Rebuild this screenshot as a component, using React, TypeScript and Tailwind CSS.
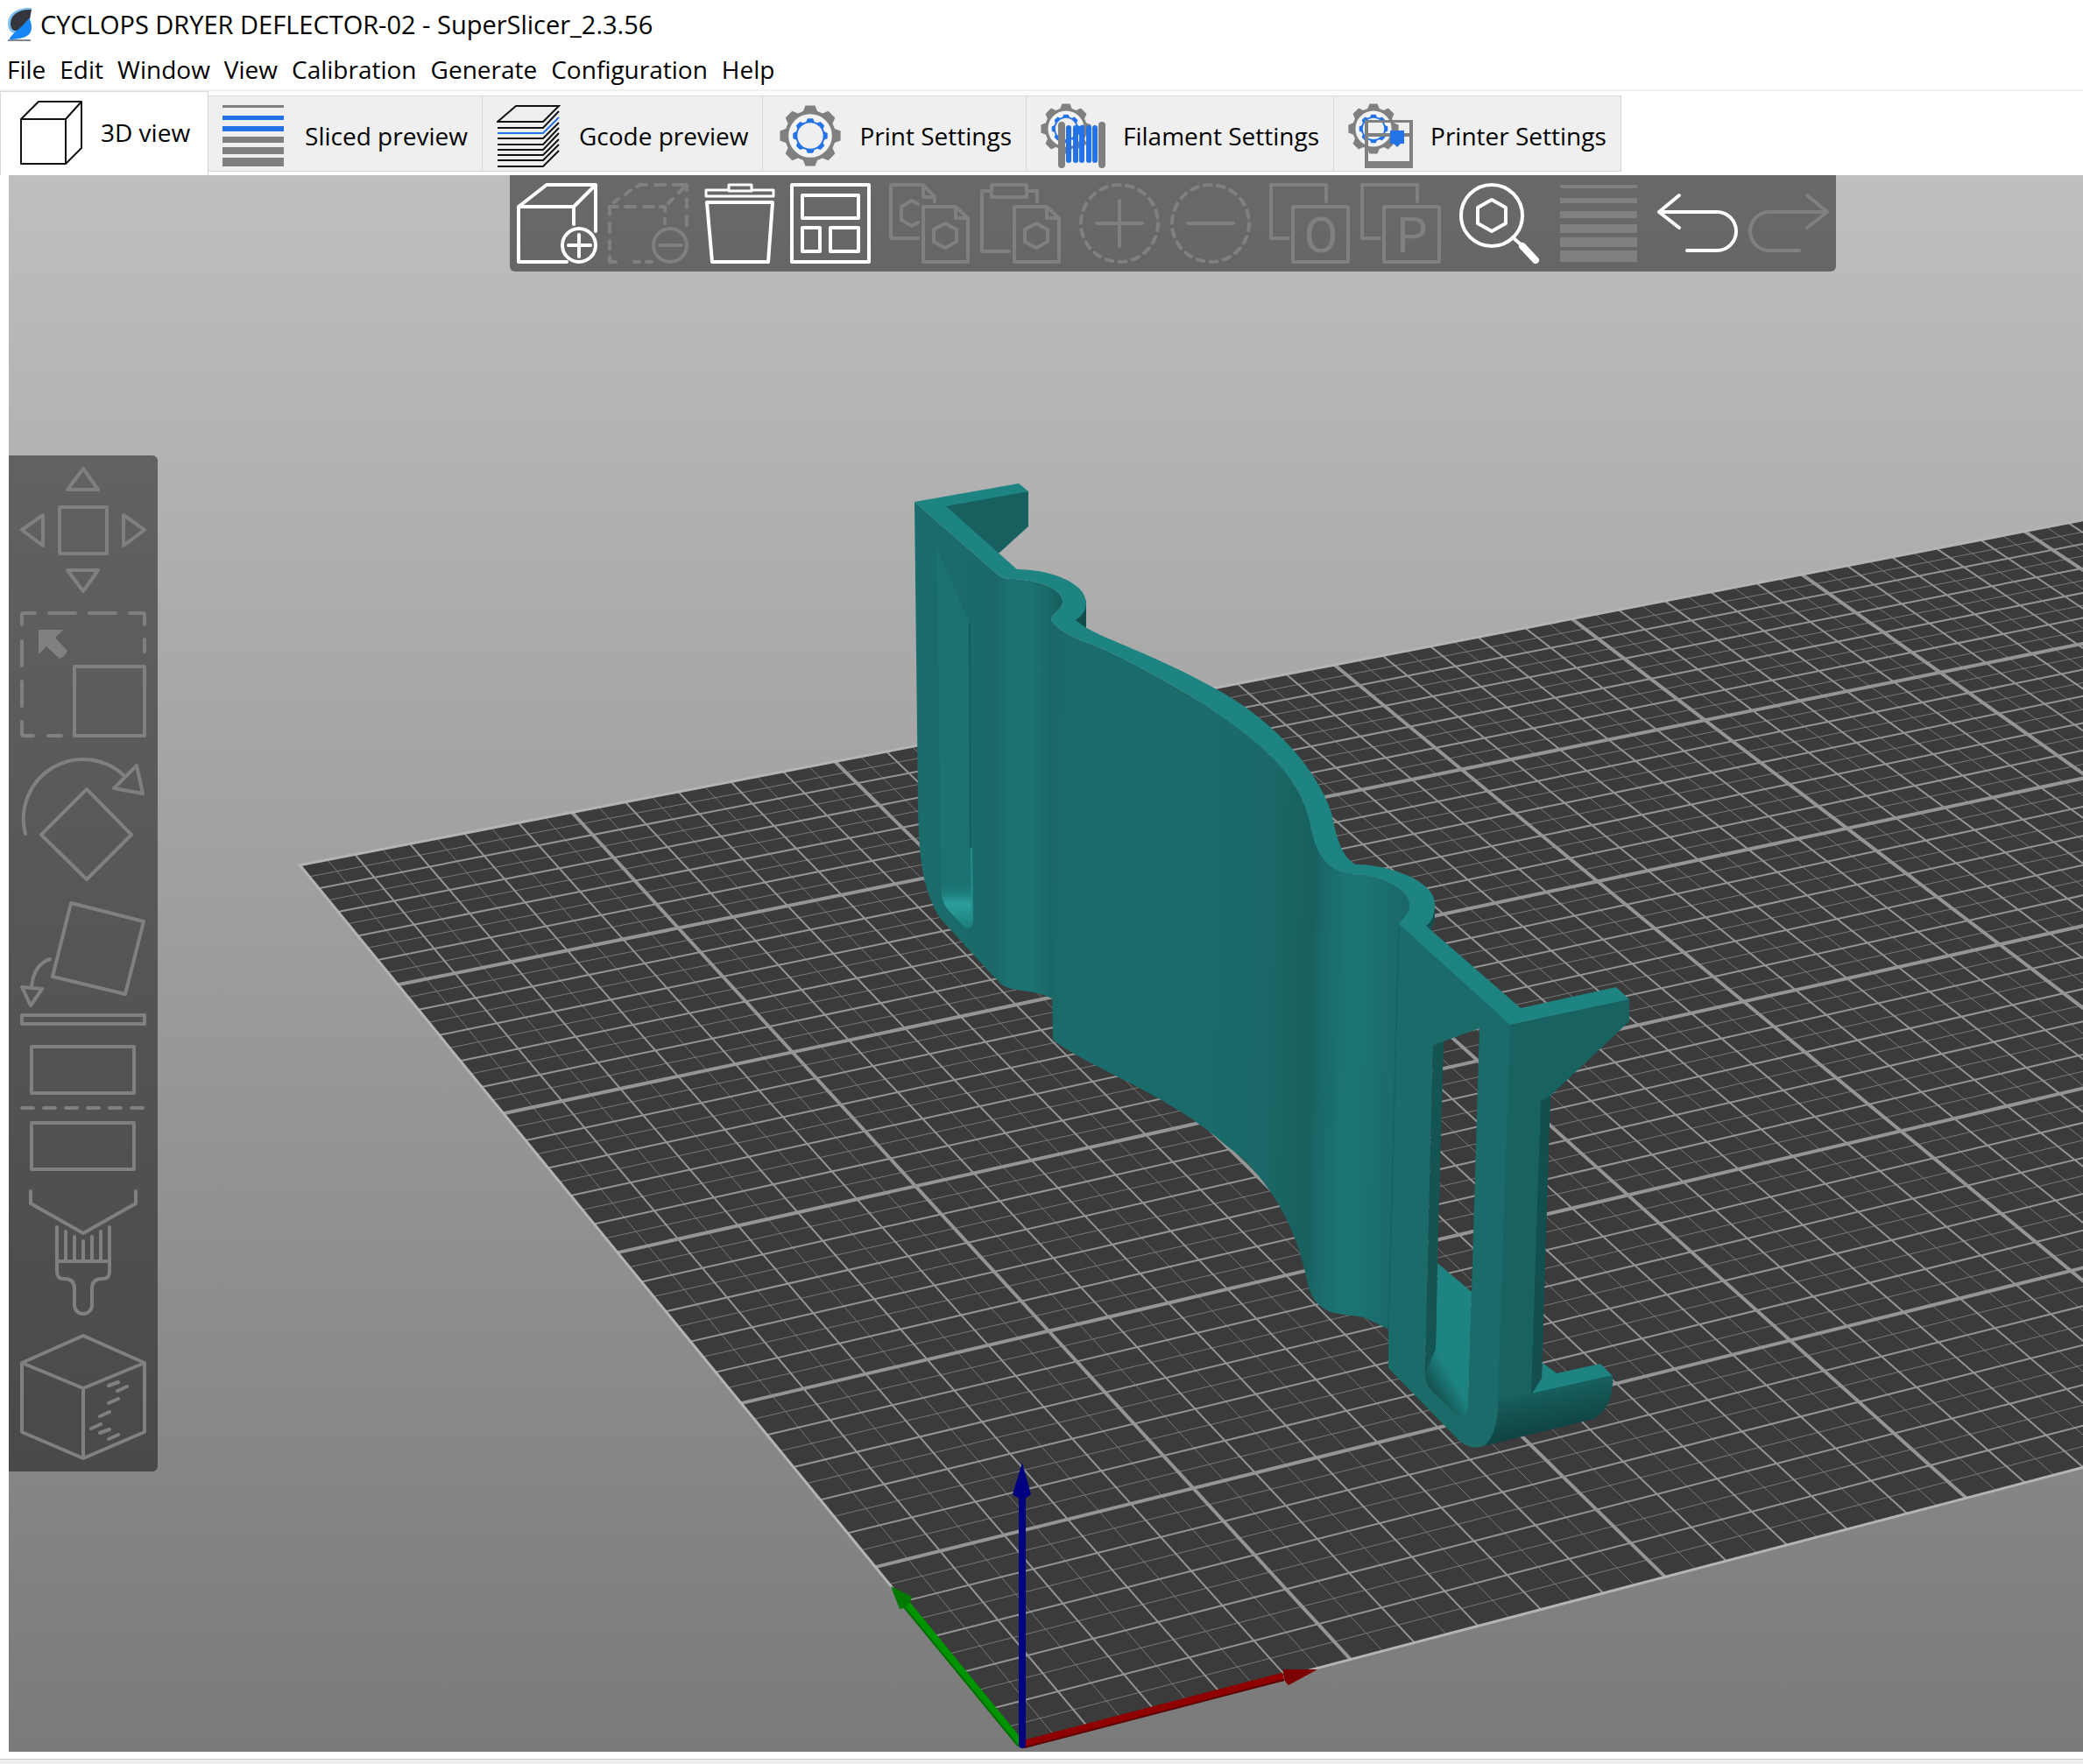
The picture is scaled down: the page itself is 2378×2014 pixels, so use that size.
import { useState, type ReactNode } from "react";

const MENUS = ["File", "Edit", "Window", "View", "Calibration", "Generate", "Configuration", "Help"];

function gearPath(cx: number, cy: number, outer: number, root: number, teeth = 8) {
  const step = (Math.PI * 2) / teeth;
  const points: string[] = [];
  for (let i = 0; i < teeth; i++) {
    const mid = i * step - Math.PI / 2;
    const corners: [number, number][] = [
      [root, -0.36],
      [outer, -0.2],
      [outer, 0.2],
      [root, 0.36],
    ];
    for (const [r, k] of corners) {
      const a = mid + k * step;
      points.push(`${(cx + r * Math.cos(a)).toFixed(1)} ${(cy + r * Math.sin(a)).toFixed(1)}`);
    }
  }
  return `M${points.join("L")}Z`;
}

function Gear({ cx, cy, r }: { cx: number; cy: number; r: number }) {
  return (
    <g>
      <path d={gearPath(cx, cy, r, r * 0.83)} fill="#808080" />
      <circle cx={cx} cy={cy} r={r * 0.71} fill="#f4f4f4" />
      <path d={gearPath(cx, cy, r * 0.57, r * 0.48)} fill="#2473e6" />
      <circle cx={cx} cy={cy} r={r * 0.42} fill="#efefef" />
    </g>
  );
}

const TABS: { label: string; icon: ReactNode }[] = [
  {
    label: "3D view",
    icon: (
      <g fill="none" stroke="#111" strokeWidth="2" strokeLinejoin="round">
        <path d="M3 22H54V73H3ZM3 22L23 2H72L54 22M72 2V55L54 73" />
      </g>
    ),
  },
  {
    label: "Sliced preview",
    icon: (
      <g>
        <path d="M0 2h70v3H0zM0 38h70v7H0zM0 50h70v8H0zM0 62h70v10H0z" fill="#808080" />
        <path d="M0 14h70v5H0zM0 26h70v6H0z" fill="#2473e6" />
      </g>
    ),
  },
  {
    label: "Gcode preview",
    icon: (
      <g fill="none" strokeWidth="2">
        <path d="M1 21L22 3H71L53 21Z" stroke="#111" />
        <path
          d="M1 28H53L71 9M1 40H53L71 22M1 47H53L71 28M1 53H53L71 34M1 59H53L71 41M1 65H53L71 47M1 72H53L71 54"
          stroke="#111"
        />
        <path d="M1 34H53L71 16" stroke="#2473e6" />
      </g>
    ),
  },
  { label: "Print Settings", icon: <Gear cx={38} cy={37} r={35} /> },
  {
    label: "Filament Settings",
    icon: (
      <g strokeLinecap="round">
        <Gear cx={29} cy={29} r={29} />
        <path d="M24 25V70M70 25V70" stroke="#808080" strokeWidth="8" />
        <path d="M32 28V65M40 28V65M47 28V65M55 28V65M62 28V65" stroke="#2473e6" strokeWidth="6" />
        <path d="M40 38L48 26" stroke="#2473e6" strokeWidth="3" />
      </g>
    ),
  },
  {
    label: "Printer Settings",
    icon: (
      <g>
        <Gear cx={29} cy={29} r={29} />
        <path d="M19 19H74V74H19ZM23 22V34H70V22ZM23 38V66H70V38Z" fill="#808080" fillRule="evenodd" />
        <path d="M48 31H64V46H60L56 50L52 46H48Z" fill="#2473e6" />
      </g>
    ),
  },
];

const PAGE = "M39 27H76L90 40V90H39ZM76 27V40H90M64 46L77 53V67L64 74L51 67V53Z";

type Tool = { label: string; enabled?: boolean; icon: ReactNode };

const TOOL_GROUPS: Tool[][] = [
  [
    {
      label: "Add",
      enabled: true,
      icon: (
        <g>
          <path d="M57 90H2V27L34 2H90V55M2 27H65L90 2M65 27V47" />
          <circle cx="71" cy="71" r="19" />
          <path d="M59 71H84M71 59V84" />
        </g>
      ),
    },
    {
      label: "Delete",
      icon: (
        <g>
          <path
            d="M2 36V27H11M20 27H31M41 27H52M60 27H65V32M65 41V46M7 22L12 18M20 13L26 8M33 4L36 2H44M54 2H65M75 2H90V8M69 23L74 18M81 11L86 6M90 18V28M90 38V48M2 46V56M2 66V75M2 84V90H9M30 90H36M44 90H50"
          />
          <circle cx="71" cy="71" r="19" />
          <path d="M59 71H84" />
        </g>
      ),
    },
    {
      label: "Delete all",
      enabled: true,
      icon: (
        <g>
          <path d="M8 8H34V2H60V8H85V15H8ZM34 9H60" strokeWidth="3" />
          <path d="M9 22H84L79 90H15Z" />
        </g>
      ),
    },
    {
      label: "Arrange",
      enabled: true,
      icon: <path d="M2 2H90V90H2ZM14 14H78V40H14ZM14 51H34V78H14ZM46 51H78V78H46Z" />,
    },
  ],
  [
    {
      label: "Copy",
      icon: <path d={`M33 63H2V2H39L52 16V21M39 2V16H52M33 24L26 20L14 27V42L26 49L33 45${PAGE}`} />,
    },
    { label: "Paste", icon: <path d={`M12 9H2V78H33M13 2H53V16H13ZM53 9H65V21${PAGE}`} /> },
  ],
  [
    {
      label: "Add instance",
      icon: (
        <g>
          <circle cx="46" cy="46" r="44" strokeDasharray="8 7.36" />
          <path d="M20 46H72M46 20V72" />
        </g>
      ),
    },
    {
      label: "Remove instance",
      icon: (
        <g>
          <circle cx="46" cy="46" r="44" strokeDasharray="8 7.36" />
          <path d="M20 46H72" />
        </g>
      ),
    },
  ],
  [
    {
      label: "Split to objects",
      icon: (
        <g>
          <path d="M22 63H2V2H65V21M27 27H90V90H27Z" />
          <text x="59" y="79" textAnchor="middle" fontFamily="Roboto" fontSize="56" fill="currentColor" stroke="none">
            O
          </text>
        </g>
      ),
    },
    {
      label: "Split to parts",
      icon: (
        <g>
          <path d="M22 63H2V2H65V21M27 27H90V90H27Z" />
          <text x="59" y="79" textAnchor="middle" fontFamily="Roboto" fontSize="56" fill="currentColor" stroke="none">
            P
          </text>
        </g>
      ),
    },
  ],
  [
    {
      label: "Search",
      enabled: true,
      icon: (
        <g>
          <circle cx="37" cy="37" r="35" />
          <path d="M37 19L53 28V46L37 55L21 46V28ZM61 62L70 70" />
          <path d="M72 72L87 88" strokeWidth="8" />
        </g>
      ),
    },
  ],
  [
    {
      label: "Variable layer height",
      icon: (
        <path
          d="M2 2H90V6H2ZM2 17H90V23H2ZM2 32H90V40H2ZM2 47H90V57H2ZM2 62H90V73H2ZM2 77H90V90H2Z"
          fill="currentColor"
          stroke="none"
        />
      ),
    },
  ],
  [
    { label: "Undo", enabled: true, icon: <path d="M25 14L2 33L25 51M2 33H68A22 22 0 0 1 68 77H34" /> },
    { label: "Redo", icon: <path d="M67 14L90 33L67 51M90 33H24A22 22 0 0 0 24 77H58" /> },
  ],
];

const GIZMOS: { label: string; icon: ReactNode }[] = [
  {
    label: "Move",
    icon: (
      <path d="M45 46H99V99H45ZM72 2L89 26H54ZM2 72L26 55V90ZM142 72L118 55V90ZM54 118H89L72 142Z" />
    ),
  },
  {
    label: "Scale",
    icon: (
      <g>
        <path d="M2 15V4Q2 2 4 2H17M33 2H63M79 2H109M125 2H140Q142 2 142 4V15M142 32V46M2 34V62M2 80V108M2 126V140Q2 142 4 142H15M32 142H47M62 63H142V142H62Z" />
        <path d="M21 21H49L40 30L54 45Q51 52 45 54L30 40L21 49Z" fill="currentColor" stroke="none" />
      </g>
    ),
  },
  {
    label: "Rotate",
    icon: <path d="M6 89A68 68 0 0 1 118 22M133 11L140 43L107 37ZM76 38L127 90L76 141L24 90Z" />,
  },
  {
    label: "Place on face",
    icon: <path d="M58 3L141 24L120 107L37 87ZM34 67Q16 73 13 98M2 99L25 101L12 120ZM2 131H142V141H2Z" />,
  },
  {
    label: "Cut",
    icon: (
      <path d="M13 2H130V55H13ZM2 72H15M27 72H40M52 72H65M77 72H90M102 72H115M127 72H140M13 89H130V142H13Z" />
    ),
  },
  {
    label: "Paint-on supports",
    icon: (
      <path d="M12 2V16L72 50L132 16V2M42 43V94Q42 102 50 102Q62 102 62 113V132A10 10 0 0 0 82 132V113Q82 102 94 102Q102 102 102 94V43M42 82H102M52 48V81M62 54V81M72 59V81M82 54V81M92 48V81" />
    ),
  },
  {
    label: "Seam painting",
    icon: (
      <path d="M72 2L142 33V112L72 142L2 112V33ZM2 33L72 62L142 33M72 62V142M101 59L112 55M111 65L122 60M101 79L112 74M91 94L102 89M81 108L92 103M91 113L102 109M101 120L112 115" />
    ),
  },
];

// Projects bed coordinates (in cm, origin at the front left corner) to the view.
function project(u: number, v: number) {
  const w = 1 + 0.0045273 * u + 0.0090747 * v;
  const x = (1166.6 + 82.035 * u - 24.371 * v) / w;
  const y = (1993 - 11.104 * u - 24.547 * v) / w;
  return `${x.toFixed(1)} ${y.toFixed(1)}`;
}

const BED_WIDTH = 50;
const BED_DEPTH = 30;

function gridLines(kind: "thin" | "medium" | "bold") {
  const wanted = (i: number) => {
    if (i % 10 === 0) return kind === "bold";
    if (i % 2 === 0) return kind === "medium";
    return kind === "thin";
  };
  let d = "";
  for (let i = 1; i < BED_WIDTH * 2; i++) {
    if (wanted(i)) d += `M${project(i / 2, 0)}L${project(i / 2, BED_DEPTH)}`;
  }
  for (let i = 1; i < BED_DEPTH * 2; i++) {
    if (wanted(i)) d += `M${project(0, i / 2)}L${project(BED_WIDTH, i / 2)}`;
  }
  return d;
}

function Bed() {
  const outline = `M${project(0, 0)}L${project(0, BED_DEPTH)}L${project(BED_WIDTH, BED_DEPTH)}L${project(BED_WIDTH, 0)}Z`;
  return (
    <g fill="none">
      <path d={outline} fill="#3b3b3b" />
      <path d={gridLines("thin")} stroke="#797979" strokeWidth="1" />
      <path d={gridLines("medium")} stroke="#959595" strokeWidth="2" />
      <path d={gridLines("bold")} stroke="#959595" strokeWidth="4" />
      <path d={outline} stroke="#b4b4b4" strokeWidth="3" />
    </g>
  );
}

// Inner edge of the top rim, from the right end back to the left panel.
const RIM_RIGHT =
  "C1604 1046 1609 1042 1609 1034C1609 1012 1570 999 1543 998C1518 996 1502 978 1496 942C1484 884 1440 846 1353 791C1320 772 1282 750 1247 736C1225 728 1208 720 1200 708";
const RIM_LEFT = "C1202 698 1213 697 1213 686C1211 670 1180 661 1153 661Q1146 661 1140 657Z";

function Model() {
  return (
    <g>
      <defs>
        <linearGradient id="wall" gradientUnits="userSpaceOnUse" x1="1200" y1="1200" x2="1600" y2="1208">
          <stop offset="0" stopColor="#1a6968" />
          <stop offset="0.03" stopColor="#1a6d6c" />
          <stop offset="0.3" stopColor="#1a6c6b" />
          <stop offset="0.6" stopColor="#1a6968" />
          <stop offset="0.7" stopColor="#186261" />
          <stop offset="0.74" stopColor="#186160" />
          <stop offset="0.77" stopColor="#196a69" />
          <stop offset="0.83" stopColor="#1b7372" />
          <stop offset="0.89" stopColor="#1b7372" />
          <stop offset="1" stopColor="#1a6968" />
        </linearGradient>
        <linearGradient id="leftWall" gradientUnits="userSpaceOnUse" x1="1044" y1="0" x2="1212" y2="0">
          <stop offset="0" stopColor="#1a6d6c" />
          <stop offset="0.55" stopColor="#1a6968" />
          <stop offset="0.65" stopColor="#1b7170" />
          <stop offset="0.79" stopColor="#1b7271" />
          <stop offset="0.92" stopColor="#1a6968" />
          <stop offset="1" stopColor="#175c5c" />
        </linearGradient>
        <linearGradient id="hook" gradientUnits="userSpaceOnUse" x1="1770" y1="1580" x2="1780" y2="1634">
          <stop offset="0" stopColor="#186262" />
          <stop offset="0.5" stopColor="#135250" />
          <stop offset="1" stopColor="#0f4342" />
        </linearGradient>
        <linearGradient id="pocket" gradientUnits="userSpaceOnUse" x1="0" y1="1008" x2="0" y2="1060">
          <stop offset="0" stopColor="#1b7271" />
          <stop offset="0.2" stopColor="#1d7c7a" />
          <stop offset="0.48" stopColor="#2b9f9c" />
          <stop offset="0.75" stopColor="#228d8a" />
          <stop offset="1" stopColor="#1d7c7a" />
        </linearGradient>
        <linearGradient id="slot" gradientUnits="userSpaceOnUse" x1="1629" y1="1576" x2="1652" y2="1562">
          <stop offset="0" stopColor="#145453" />
          <stop offset="1" stopColor="#1e8481" />
        </linearGradient>
      </defs>

      <path d="M1070 574L1174 561V601L1141 631L1134 632Z" fill="#185f5f" />
      <path d="M1240 685V719L1226 708Z" fill="#124d4c" />
      <path d="M1638 1030V1048L1634 1062L1626 1057Z" fill="#135250" />

      <path
        d={`M1200 708L1196 1132H1201L1202 1187C1240 1218 1330 1246 1400 1308C1440 1336 1476 1390 1490 1452C1498 1508 1530 1498 1557 1504L1588 1519L1600 1055${RIM_RIGHT}Z`}
        fill="url(#wall)"
      />
      <path
        d={`M1044 573L1048 918C1049 962 1049 1010 1073 1048L1103 1081L1143 1124C1160 1134 1176 1128 1201 1140L1200 708${RIM_LEFT}`}
        fill="url(#leftWall)"
      />
      <path
        d="M1597 1055L1585 1518V1562L1667 1646Q1683 1658 1699 1648Q1709 1636 1712 1600L1726 1170ZM1648 1189L1689 1174L1680 1476L1676 1608Q1674 1622 1660 1612L1633 1586Q1626 1576 1627 1564L1636 1194Z"
        fill="#1a6b6a"
        fillRule="evenodd"
      />
      <path d="M1597 1058L1585 1518" stroke="#186362" strokeWidth="2" />

      <path
        d="M1641 1442L1680 1475L1676 1608Q1674 1622 1660 1612L1633 1586Q1626 1576 1627 1564L1639 1535Z"
        fill="url(#slot)"
      />
      <path d="M1636 1194L1648 1189L1641 1442L1639 1540L1627 1568Z" fill="#145453" />

      <path d="M1724 1170L1860 1141V1166L1770 1251L1748 1595L1700 1649Q1710 1636 1710 1600Z" fill="#186262" />
      <path d="M1759 1257L1770 1251L1760 1574L1748 1592Z" fill="#124f4e" />
      <path d="M1761 1556L1777 1568L1827 1557L1841 1571L1748 1592L1760 1574Z" fill="#1e8481" />
      <path d="M1711 1599L1748 1591L1841 1570Q1843 1606 1820 1620L1694 1651Q1709 1640 1711 1599Z" fill="url(#hook)" />

      <path
        d="M1069 624L1107 712L1111 1036V1052Q1110 1062 1101 1059L1087 1044Q1075 1032 1075 1020Z"
        fill="#1b7271"
      />
      <path d="M1074 1008L1110 1012L1111 1052Q1110 1062 1101 1059L1087 1044Q1075 1032 1075 1020Z" fill="url(#pocket)" />
      <path d="M1107 712L1108 968" stroke="#175c5c" strokeWidth="2" />
      <path d="M1109 968L1110 1050" stroke="#228d8a" strokeWidth="2" />

      <path
        d={`M1044 573L1163 552L1174 561L1080 578L1161 650C1196 650 1240 664 1240 689Q1240 700 1228 708C1250 728 1300 738 1387 786C1440 814 1500 868 1520 928C1526 956 1530 976 1547 987C1580 986 1638 1004 1638 1032Q1638 1050 1628 1057L1736 1151L1845 1127L1860 1141L1724 1170L1597 1055${RIM_RIGHT}${RIM_LEFT}`}
        fill="#1e8481"
      />
    </g>
  );
}

function Axes() {
  return (
    <g>
      <path d="M1166 1992L1465 1914" stroke="#900000" strokeWidth="9" />
      <path d="M1170 1995L1466 1918" stroke="#5c0000" strokeWidth="2" />
      <path d="M1465 1906L1504 1906L1471 1924Q1464 1918 1465 1906Z" fill="#7c0000" />
      <path d="M1166 1992L1033 1829" stroke="#009400" strokeWidth="9" />
      <path d="M1162 1993L1029 1831" stroke="#006f00" strokeWidth="2" />
      <path d="M1017 1811L1041 1823Q1038 1836 1027 1837Z" fill="#007a00" />
      <path d="M1167 1992V1708" stroke="#000080" strokeWidth="8" strokeLinecap="round" />
      <path d="M1167 1670L1177 1706Q1167 1716 1156 1706Z" fill="#000080" />
    </g>
  );
}

function Logo() {
  return (
    <svg viewBox="0 0 30 40" className="h-10 w-[30px]" aria-hidden>
      <path d="M28 1C14 0 1 6 1 19C1 27 6 31 12 30L26 16Z" fill="#7cc0f2" />
      <path d="M28 3C15 2 4 8 4 19C4 26 9 29 14 26L26 13Z" fill="#33373c" />
      <path d="M25 13C27 16 28 19 28 24C28 32 20 37 3 37C4 31 16 25 25 13Z" fill="#1487f5" />
      <path d="M1 37H27V39H1Z" fill="#7d8894" />
    </svg>
  );
}

export default function App() {
  const [activeTab, setActiveTab] = useState("3D view");

  return (
    <div className="flex h-screen flex-col overflow-hidden bg-white font-['Open_Sans',sans-serif] text-[28px] text-black">
      <header>
        <div className="flex h-14 items-center gap-2 pl-2">
          <Logo />
          <h1 className="text-[29px]">CYCLOPS DRYER DEFLECTOR-02 - SuperSlicer_2.3.56</h1>
        </div>
        <nav className="flex h-[46px] items-center gap-4 pl-2">
          {MENUS.map((menu) => (
            <button key={menu} type="button">
              {menu}
            </button>
          ))}
        </nav>
      </header>

      <div role="tablist" className="flex h-[98px] items-end border-t-2 border-[#f0f0f0] bg-white pb-1">
        {TABS.map(({ label, icon }) => {
          const active = label === activeTab;
          return (
            <button
              key={label}
              type="button"
              role="tab"
              aria-selected={active}
              onClick={() => setActiveTab(label)}
              className={
                active
                  ? "flex h-24 items-center gap-5 self-start border-x border-t border-[#d9d9d9] bg-white px-5 pb-1"
                  : "flex h-[87px] items-center gap-5 border-y border-r border-[#d9d9d9] bg-[#efefef] px-4 pt-1"
              }
            >
              <svg viewBox="0 0 74 74" className="size-[74px] shrink-0" aria-hidden>
                {icon}
              </svg>
              <span className="whitespace-nowrap">{label}</span>
            </button>
          );
        })}
      </div>

      <main className="relative ml-[10px] min-h-0 flex-1 overflow-hidden bg-linear-to-b from-[#bfbfbf] to-[#7a7a7a]">
        <svg
          viewBox="10 200 2368 1800"
          preserveAspectRatio="xMinYMin slice"
          className="absolute inset-0 size-full"
          role="img"
          aria-label="Print bed with model"
        >
          <Bed />
          <Model />
          <Axes />
        </svg>

        <div className="absolute top-0 left-[572px] flex h-[110px] gap-[21px] rounded-b-md bg-black/45 px-2 pt-[9px]">
          {TOOL_GROUPS.map((group) => (
            <div key={group[0].label} className="flex gap-3">
              {group.map(({ label, enabled, icon }) => (
                <button
                  key={label}
                  type="button"
                  aria-label={label}
                  disabled={!enabled}
                  className="size-[92px] text-white disabled:text-[#808080]"
                >
                  <svg
                    viewBox="0 0 92 92"
                    className="size-full"
                    fill="none"
                    stroke="currentColor"
                    strokeWidth="4"
                    strokeLinecap="round"
                    strokeLinejoin="round"
                  >
                    {icon}
                  </svg>
                </button>
              ))}
            </div>
          ))}
        </div>

        <div className="absolute top-80 left-0 flex flex-col gap-[21px] rounded-r-md bg-black/45 p-[13px]">
          {GIZMOS.map(({ label, icon }) => (
            <button key={label} type="button" aria-label={label} disabled className="size-36 text-[#808080]">
              <svg
                viewBox="0 0 144 144"
                className="size-full"
                fill="none"
                stroke="currentColor"
                strokeWidth="4"
                strokeLinecap="round"
                strokeLinejoin="round"
              >
                {icon}
              </svg>
            </button>
          ))}
        </div>
      </main>

      <footer className="mt-2 h-[6px] border-t border-[#c8c8c8] bg-[#f0f0f0]" />
    </div>
  );
}
